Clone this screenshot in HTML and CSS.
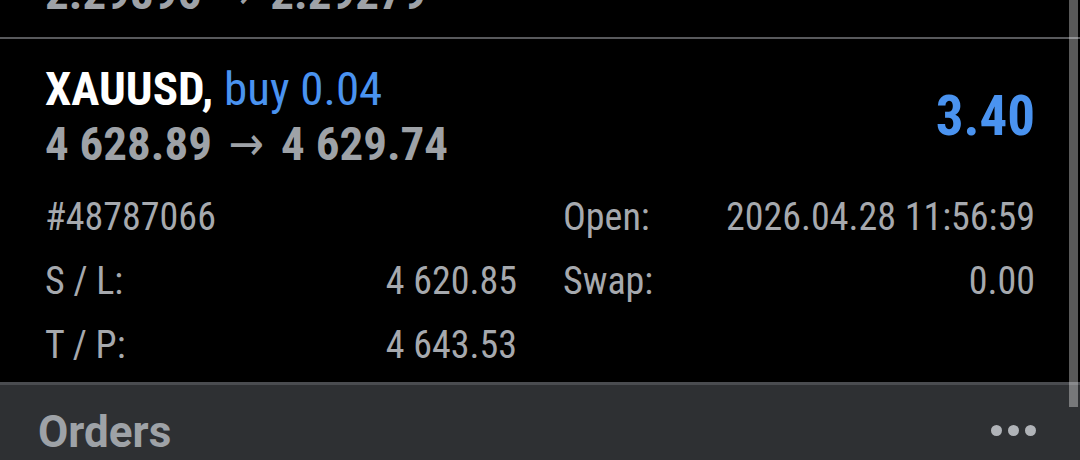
FILE: index.html
```html
<!DOCTYPE html>
<html lang="en">
<head>
    <meta charset="UTF-8">
    <meta name="viewport" content="width=device-width, initial-scale=1.0">
    <title>Trade</title>
    <link rel="stylesheet" href="styles.css">
</head>
<body>

<div class="screen">
    <div class="prev">
        <div class="prev-price">2.29896 <span class="arrow">→</span> 2.29279</div>
    </div>

    <div class="position">
        <div class="head">
            <div class="head-left">
                <div class="symbol"><b>XAUUSD,</b> <span class="type">buy 0.04</span></div>
                <div class="prices">4 628.89 <span class="arrow">→</span> 4 629.74</div>
            </div>
            <div class="profit">3.40</div>
        </div>

        <div class="details">
            <div class="cell"><span>#48787066</span><span></span></div>
            <div class="cell"><span>Open:</span><span>2026.04.28 11:56:59</span></div>
            <div class="cell"><span>S / L:</span><span>4 620.85</span></div>
            <div class="cell"><span>Swap:</span><span>0.00</span></div>
            <div class="cell"><span>T / P:</span><span>4 643.53</span></div>
            <div class="cell"><span></span><span></span></div>
        </div>
    </div>

    <div class="orders-bar">
        <span class="orders-title">Orders</span>
        <span class="dots"><i></i><i></i><i></i></span>
    </div>

    <div class="scrollbar"></div>
</div>

</body>
</html>
```

FILE: styles.css
```css
body {
    margin: 0;
    background: #000;
    font-family: "Roboto Condensed", "Liberation Sans Narrow", "DejaVu Sans Condensed", Roboto, sans-serif;
    overflow: hidden;
}
.screen {
    position: relative;
    width: 1080px;
    height: 460px;
    overflow: hidden;
}
.prev {
    height: 37px;
    padding-left: 45px;
    border-bottom: 2px solid #58595c;
    overflow: hidden;
}
.prev-price {
    margin-top: -31px;
    font-size: 47px;
    line-height: 48px;
    font-weight: bold;
    color: #9ea2a7;
}
.arrow {
    font-weight: normal;
    margin: 0 6px;
}
.position {
    padding: 22px 45px 5px 45px;
}
.head {
    display: flex;
    justify-content: space-between;
    align-items: center;
}
.symbol, .prices {
    font-size: 47px;
    line-height: 55px;
}
.symbol b {
    color: #fff;
}
.type {
    color: #4a93f0;
}
.prices {
    font-weight: bold;
    color: #9ea2a7;
}
.profit {
    font-size: 55px;
    font-weight: bold;
    color: #4a93f0;
}
.details {
    margin-top: 14px;
    display: grid;
    grid-template-columns: 1fr 1fr;
    column-gap: 46px;
}
.cell {
    display: flex;
    justify-content: space-between;
    font-size: 38px;
    line-height: 64px;
    height: 64px;
    color: #a6a9ae;
}
.orders-bar {
    height: 90px;
    padding: 0 44px 0 38px;
    border-top: 3px solid #4a4c50;
    background: #2e3033;
    display: flex;
    justify-content: space-between;
    align-items: center;
}
.orders-title {
    margin-top: 4px;
    font-family: Roboto, sans-serif;
    font-size: 44px;
    line-height: 44px;
    font-weight: bold;
    color: #9ea2a7;
}
.dots {
    display: flex;
    gap: 6px;
}
.dots i {
    width: 11px;
    height: 11px;
    border-radius: 50%;
    background: #b0b3b8;
}
.scrollbar {
    position: absolute;
    top: 0;
    right: 2px;
    width: 9px;
    height: 407px;
    background: rgba(255, 255, 255, 0.35);
}
```
